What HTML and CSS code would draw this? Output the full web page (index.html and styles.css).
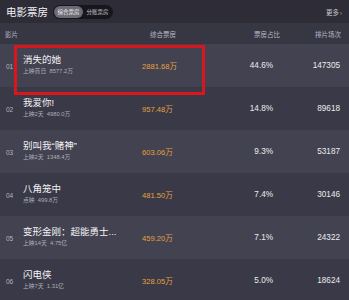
FILE: index.html
```html
<!DOCTYPE html>
<html lang="zh-CN">
<head>
<meta charset="utf-8">
<title>电影票房</title>
<link rel="stylesheet" href="styles.css">
</head>
<body>
<div class="page">
  <div class="top">
    <div class="title">电影票房</div>
    <div class="toggle">
      <span class="seg active">综合票房</span>
      <span class="seg">分账票房</span>
    </div>
    <div class="more">更多<span class="arr">›</span></div>
  </div>
  <div class="thead">
    <div class="c-film">影片</div>
    <div class="c-box">综合票房</div>
    <div class="c-pct">票房占比</div>
    <div class="c-ses">排片场次</div>
  </div>
  <div class="tbody">
    <div class="row odd">
      <div class="rank">01</div>
      <div class="film"><div class="name">消失的她</div><div class="sub">上映首日&nbsp;&nbsp;8577.2万</div></div>
      <div class="box">2881.68万</div>
      <div class="pct">44.6%</div>
      <div class="ses">147305</div>
    </div>
    <div class="row even">
      <div class="rank">02</div>
      <div class="film"><div class="name">我爱你!</div><div class="sub">上映2天&nbsp;&nbsp;4980.0万</div></div>
      <div class="box">957.48万</div>
      <div class="pct">14.8%</div>
      <div class="ses">89618</div>
    </div>
    <div class="row odd">
      <div class="rank">03</div>
      <div class="film"><div class="name">别叫我“赌神”</div><div class="sub">上映2天&nbsp;&nbsp;1348.4万</div></div>
      <div class="box">603.06万</div>
      <div class="pct">9.3%</div>
      <div class="ses">53187</div>
    </div>
    <div class="row even">
      <div class="rank">04</div>
      <div class="film"><div class="name">八角笼中</div><div class="sub">点映&nbsp;&nbsp;499.8万</div></div>
      <div class="box">481.50万</div>
      <div class="pct">7.4%</div>
      <div class="ses">30146</div>
    </div>
    <div class="row odd">
      <div class="rank">05</div>
      <div class="film"><div class="name">变形金刚：超能勇士...</div><div class="sub">上映14天&nbsp;&nbsp;4.75亿</div></div>
      <div class="box">459.20万</div>
      <div class="pct">7.1%</div>
      <div class="ses">24322</div>
    </div>
    <div class="row even">
      <div class="rank">06</div>
      <div class="film"><div class="name">闪电侠</div><div class="sub">上映7天&nbsp;&nbsp;1.31亿</div></div>
      <div class="box">328.05万</div>
      <div class="pct">5.0%</div>
      <div class="ses">18624</div>
    </div>
    <div class="highlight"></div>
  </div>
</div>
</body>
</html>
```
FILE: styles.css
```css
html, body {
  margin: 0;
  padding: 0;
  background: #2d2c37;
}
body {
  font-family: "Liberation Sans", "Noto Sans CJK SC", sans-serif;
  color: #ececf0;
  width: 349px;
  height: 300px;
  overflow: hidden;
}
.top {
  height: 23px;
  display: flex;
  align-items: center;
  padding: 0 7px 0 6px;
  background: #2d2c37;
}
.title {
  font-size: 10.5px;
  color: #f2f2f4;
  font-family: "Noto Sans CJK SC", sans-serif;
}
.toggle {
  margin-left: 5px;
  display: flex;
  align-items: center;
  background: #17161e;
  border-radius: 7px;
  padding: 1px;
  height: 12px;
}
.seg {
  font-size: 5.5px;
  color: #c9c9d0;
  padding: 0 3.5px;
  line-height: 12px;
  border-radius: 6px;
  font-family: "Noto Sans CJK SC", sans-serif;
}
.seg.active {
  background: #6c6b76;
  color: #f0f0f3;
}
.more {
  margin-left: auto;
  font-size: 6.5px;
  color: #c8c8d0;
  font-family: "Noto Sans CJK SC", sans-serif;
}
.arr {
  margin-left: 1px;
}
.thead {
  height: 21px;
  display: flex;
  align-items: center;
  background: #373643;
  font-size: 6.5px;
  color: #b9b9c3;
  font-family: "Noto Sans CJK SC", sans-serif;
  padding: 0 8px 0 5px;
  white-space: nowrap;
}
.c-film { width: 145px; }
.c-box { width: 30px; }
.c-pct { width: 100px; text-align: right; }
.c-ses { flex: 1; text-align: right; }
.tbody {
  position: relative;
}
.row {
  height: 43px;
  display: flex;
  align-items: center;
  padding: 0 9px 0 6px;
}
.row.odd { background: #434251; }
.row.even { background: #3a3947; }
.rank {
  width: 17px;
  font-size: 6.5px;
  color: #b5b5be;
  padding-top: 1px;
}
.film {
  width: 119px;
  display: flex;
  flex-direction: column;
  gap: 1px;
  margin-top: -2px;
}
.name {
  font-size: 9.5px;
  line-height: 12px;
  color: #f3f3f5;
  white-space: nowrap;
}
.sub {
  font-size: 5.8px;
  line-height: 8px;
  color: #aeaeb8;
  white-space: nowrap;
}
.box {
  width: 60px;
  font-size: 7.6px;
  color: #e5a13f;
}
.pct {
  width: 71px;
  text-align: right;
  font-size: 8.2px;
  color: #ececf0;
}
.ses {
  flex: 1;
  text-align: right;
  font-size: 8.2px;
  color: #ececf0;
}
.highlight {
  position: absolute;
  left: 14px;
  top: 1px;
  width: 185px;
  height: 44px;
  border: 3px solid #d8161c;
}
```
